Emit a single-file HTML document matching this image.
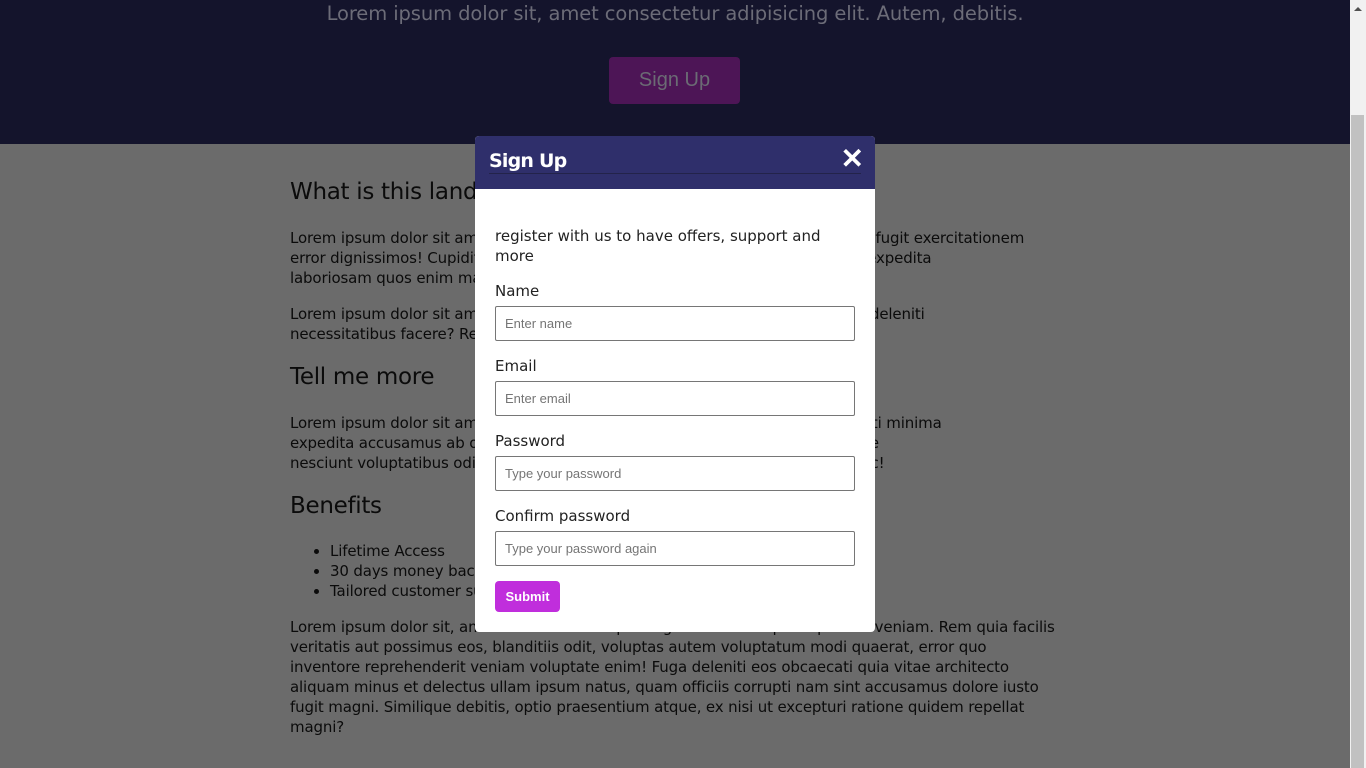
<!DOCTYPE html>
<html><head><style>
body{margin:0;width:1366px;height:768px;overflow:hidden;font-family:"DejaVu Sans","Liberation Sans",sans-serif;background:#6b6b6b;position:relative}
.hdr{position:absolute;left:0;top:0;width:1350px;height:144px;background:#14142c}
.sub{position:absolute;top:2px;left:0;width:1350px;text-align:center;color:#6c6c78;font-size:19.5px;letter-spacing:-0.1px}
.sbtn{position:absolute;left:609px;top:57px;width:131px;height:47px;background:#4d1556;border-radius:4px;color:#6b6b74;font:20px "Liberation Sans",sans-serif;text-align:center;line-height:47px}
.c{position:absolute;left:290px;color:#0b0b0b;font-size:15px;line-height:20px;white-space:nowrap;letter-spacing:-0.15px}
h2{position:absolute;left:290px;margin:0;font-size:23px;font-weight:normal;color:#0b0b0b;letter-spacing:-0.3px}
ul{margin:0;padding-left:40px}
.sb{position:absolute;left:1350px;top:0;width:16px;height:768px;background:#f1f1f1}
.th{position:absolute;left:1px;top:115px;width:13px;height:653px;background:#c1c1c1}
.ar{position:absolute;left:4px;top:7px;width:0;height:0;border-left:4px solid transparent;border-right:4px solid transparent;border-bottom:4px solid #505050}
.m{position:absolute;left:475px;top:136px;width:400px;height:496px;background:#fff;border-radius:4px;overflow:hidden}
.mh{height:53px;background:#2f2f6b;position:relative}
.mh .t{position:absolute;left:14px;top:14px;color:#fff;font-size:19px;font-weight:bold;letter-spacing:-0.8px}
.mh .ln{position:absolute;left:14px;right:14px;top:37px;border-top:1px solid #23234a}
.mh .x{position:absolute;right:11px;top:6px;color:#fff;font:bold 28px "Liberation Sans",sans-serif}
.f{position:absolute;left:20px;color:#222;font-size:15px;letter-spacing:0}
.in{position:absolute;left:20px;width:358px;height:33px;border:1px solid #767676;border-radius:2px;font:13px "Liberation Sans",sans-serif;color:#757575;line-height:33px;text-indent:9px;box-sizing:content-box}
.sbm{position:absolute;left:20px;top:445px;width:65px;height:31px;background:#c02edc;border-radius:4px;color:#fff;font:bold 13px "Liberation Sans",sans-serif;text-align:center;line-height:31px}
</style></head><body>
<div class="hdr"><div class="sub">Lorem ipsum dolor sit, amet consectetur adipisicing elit. Autem, debitis.</div><div class="sbtn">Sign Up</div></div>
<h2 style="top:179px">What is this landing page about?</h2>
<div class="c" style="top:228px">Lorem ipsum dolor sit amet consectetur adipisicing elit. Voluptates autem quia fugit exercitationem<br>error dignissimos! Cupiditate, nesciunt odio quidem voluptatibus hic est optio expedita<br>laboriosam quos enim maiores.</div>
<div class="c" style="top:304px">Lorem ipsum dolor sit amet consectetur adipisicing elit. Dolorum ipsam totam deleniti<br>necessitatibus facere? Rerum, nobis.</div>
<h2 style="top:364px">Tell me more</h2>
<div class="c" style="top:413px">Lorem ipsum dolor sit amet consectetur adipisicing elit. Quisquam illum corrupti minima<br>expedita accusamus ab omnis voluptatibus eveniet quae totam ullam ad dolore<br>nesciunt voluptatibus odio quisquam! Lorem ipsum dolor sit am amet omnis hic!</div>
<h2 style="top:493px">Benefits</h2>
<div class="c" style="top:541px"><ul><li>Lifetime Access</li><li>30 days money back</li><li>Tailored customer support</li></ul></div>
<div class="c" style="top:617px">Lorem ipsum dolor sit, amet consectetur adipisicing elit. Minima quo explicabo veniam. Rem quia facilis<br>veritatis aut possimus eos, blanditiis odit, voluptas autem voluptatum modi quaerat, error quo<br>inventore reprehenderit veniam voluptate enim! Fuga deleniti eos obcaecati quia vitae architecto<br>aliquam minus et delectus ullam ipsum natus, quam officiis corrupti nam sint accusamus dolore iusto<br>fugit magni. Similique debitis, optio praesentium atque, ex nisi ut excepturi ratione quidem repellat<br>magni?</div>
<div class="sb"><div class="ar"></div><div class="th"></div></div>
<div class="m">
<div class="mh"><div class="t">Sign Up</div><div class="ln"></div><div class="x">✕</div></div>
<div class="f" style="top:90px;line-height:20px">register with us to have offers, support and<br>more</div>
<div class="f" style="top:146px">Name</div><div class="in" style="top:170px">Enter name</div>
<div class="f" style="top:221px">Email</div><div class="in" style="top:245px">Enter email</div>
<div class="f" style="top:296px">Password</div><div class="in" style="top:320px">Type your password</div>
<div class="f" style="top:371px">Confirm password</div><div class="in" style="top:395px">Type your password again</div>
<div class="sbm">Submit</div>
</div>
</body></html>
